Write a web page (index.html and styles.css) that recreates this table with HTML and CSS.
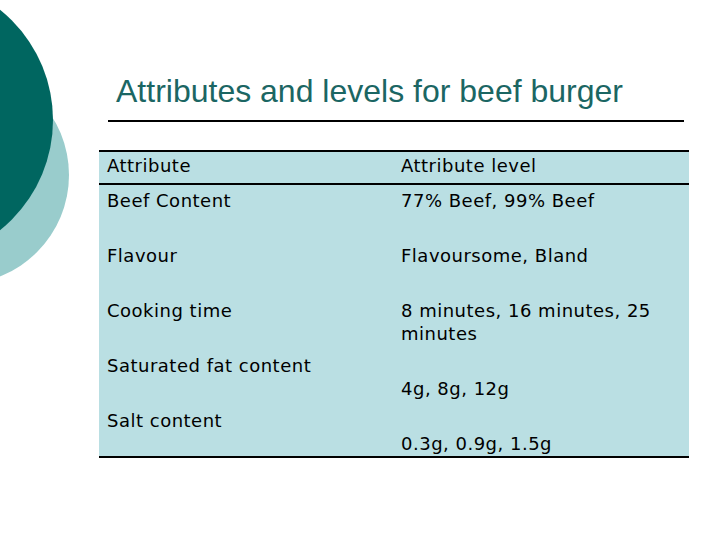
FILE: index.html
```html
<!DOCTYPE html>
<html>
<head>
<meta charset="utf-8">
<link rel="stylesheet" href="styles.css">
</head>
<body>
<div class="slide">
  <svg class="deco" width="80" height="300" viewBox="0 0 80 300">
    <circle cx="-40" cy="175" r="109" fill="#99cccc"/>
    <circle cx="-88" cy="120" r="141" fill="#006660"/>
  </svg>
  <h1 class="title">Attributes and levels for beef burger</h1>
  <div class="rule"></div>
  <div class="table">
    <div class="head">
      <div class="cell">Attribute</div>
      <div class="cell">Attribute level</div>
    </div>
    <div class="body">
      <div class="col">
        <p>Beef Content</p>
        <p>Flavour</p>
        <p>Cooking time</p>
        <p>Saturated fat content</p>
        <p class="last">Salt content</p>
      </div>
      <div class="col">
        <p>77% Beef, 99% Beef</p>
        <p>Flavoursome, Bland</p>
        <p>8 minutes, 16 minutes, 25 minutes</p>
        <p class="tight">4g, 8g, 12g</p>
        <p class="last">0.3g, 0.9g, 1.5g</p>
      </div>
    </div>
  </div>
</div>
</body>
</html>
```

FILE: styles.css
```css
html, body {
  margin: 0;
  padding: 0;
  background: #ffffff;
}

.slide {
  position: relative;
  width: 720px;
  height: 540px;
  overflow: hidden;
  padding-top: 73px;
  box-sizing: border-box;
}

.deco {
  position: absolute;
  left: 0;
  top: 0;
}

.title {
  margin: 0 0 0 116px;
  font-family: "Liberation Sans", Arial, sans-serif;
  font-weight: normal;
  font-size: 32px;
  line-height: 36px;
  color: #1b6663;
  white-space: nowrap;
}

.rule {
  margin: 11px 0 0 108px;
  width: 576px;
  height: 2px;
  background: #000000;
}

.table {
  margin: 28px 0 0 99px;
  width: 590px;
  background: #badfe3;
  border-top: 2px solid #000000;
  border-bottom: 2px solid #000000;
  font-family: "DejaVu Sans", Verdana, sans-serif;
  font-size: 18px;
  line-height: 23px;
  letter-spacing: 0.5px;
  color: #000000;
}

.head {
  display: grid;
  grid-template-columns: 294px 296px;
  padding: 2px 0 6px;
  border-bottom: 2px solid #000000;
}

.cell {
  padding: 0 8px;
}

.body {
  display: grid;
  grid-template-columns: 294px 296px;
  padding: 4px 0 1px;
}

.col {
  padding: 0 8px;
}

.col p {
  margin: 0 0 32px;
}

.col p.tight {
  margin-bottom: 32px;
}

.col p.last {
  margin-bottom: 0;
}
```
